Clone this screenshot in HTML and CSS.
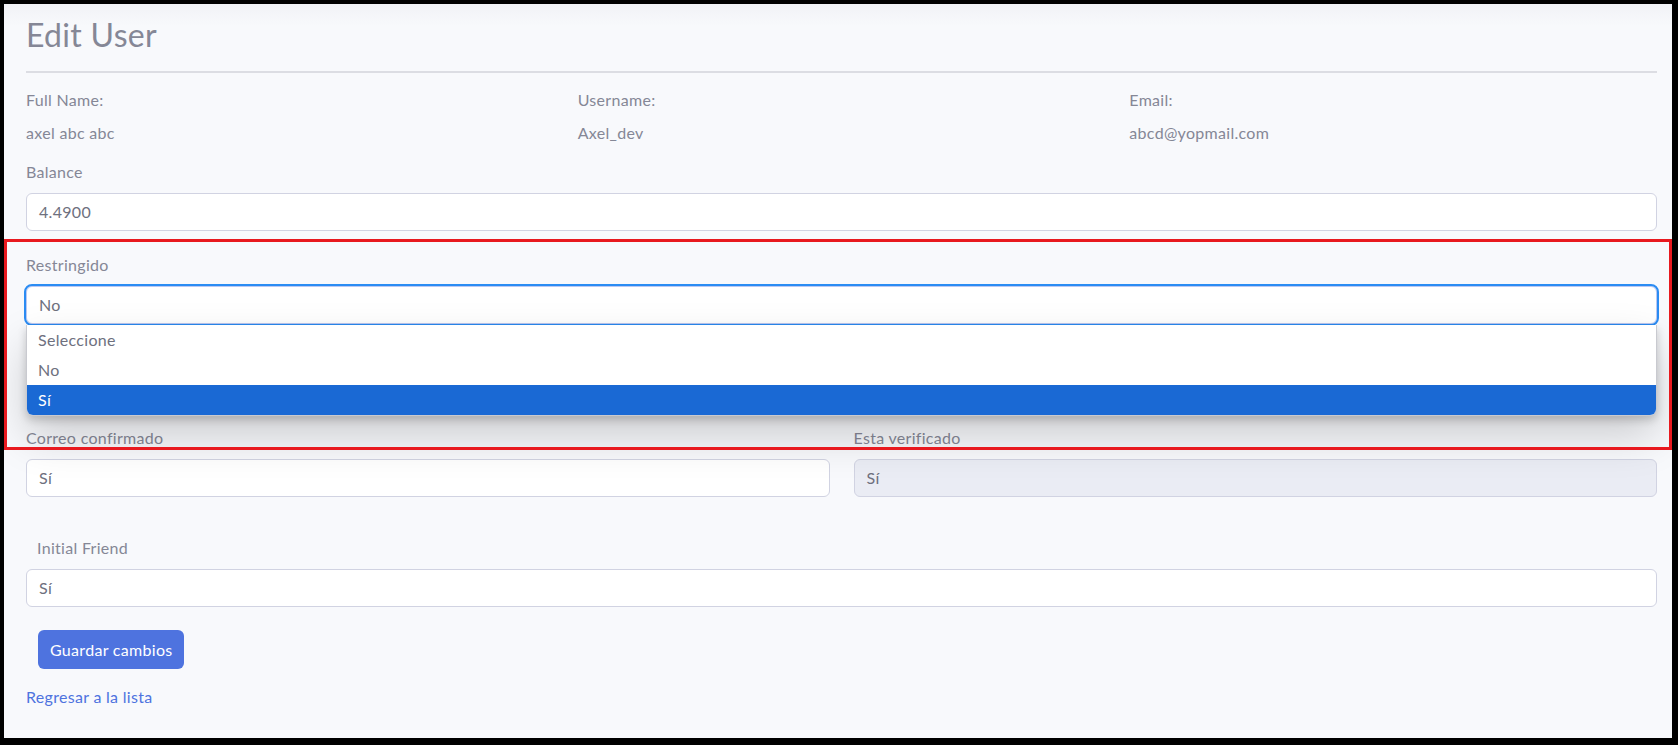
FILE: index.html
```html
<!DOCTYPE html>
<html lang="es">
<head>
<meta charset="utf-8">
<title>Edit User</title>
<link rel="stylesheet" href="styles.css">
</head>
<body>
<div class="frame">
  <main class="page">
    <h1 class="title">Edit User</h1>
    <hr class="divider">
    <div class="info-grid">
      <div class="info">
        <div class="info-label">Full Name:</div>
        <div class="info-value">axel abc abc</div>
      </div>
      <div class="info">
        <div class="info-label">Username:</div>
        <div class="info-value">Axel_dev</div>
      </div>
      <div class="info">
        <div class="info-label">Email:</div>
        <div class="info-value">abcd@yopmail.com</div>
      </div>
    </div>

    <div class="field field-balance">
      <div class="label">Balance</div>
      <div class="control">4.4900</div>
    </div>

    <div class="field field-restr">
      <div class="label">Restringido</div>
      <div class="select-wrap">
        <div class="control select-focused">No</div>
        <ul class="listbox">
          <li class="opt">Seleccione</li>
          <li class="opt">No</li>
          <li class="opt opt-active">Sí</li>
        </ul>
      </div>
    </div>

    <div class="covered"><div class="control"></div></div>

    <div class="two-col">
      <div class="field">
        <div class="label">Correo confirmado</div>
        <div class="control">Sí</div>
      </div>
      <div class="field">
        <div class="label">Esta verificado</div>
        <div class="control control-disabled">Sí</div>
      </div>
    </div>

    <div class="field field-friend">
      <div class="label label-indent">Initial Friend</div>
      <div class="control">Sí</div>
    </div>

    <div class="actions">
      <button class="btn" type="button">Guardar cambios</button>
    </div>
    <a class="back" href="#">Regresar a la lista</a>
  </main>
  <div class="annot"></div>
</div>
</body>
</html>
```

FILE: styles.css
```css
* { box-sizing: border-box; }

html, body {
  margin: 0;
  padding: 0;
  background: #000;
  height: 745px;
  overflow: hidden;
}

.frame {
  position: relative;
  margin: 4px 6px 0 4px;
  height: 734px;
  background: linear-gradient(#f1f2f6, #f8f9fc 22px);
  overflow: hidden;
  font-family: "Lato", "Noto Sans", sans-serif;
  font-size: 16px;
  letter-spacing: 0.3px;
  color: #858796;
}

.page {
  padding: 12px 15px 0 22px;
}

.title {
  margin: 0;
  font-size: 32px;
  line-height: 38px;
  font-weight: 400;
  letter-spacing: 0.3px;
  color: #858796;
}

.divider {
  margin: 17px 0 15px;
  border: 0;
  border-top: 2px solid #dcdde3;
  height: 0;
}

.info-grid {
  display: grid;
  grid-template-columns: 1fr 1fr 1fr;
  column-gap: 24px;
}

.info-label,
.info-value,
.label {
  line-height: 24px;
}

.info-value {
  margin-top: 9px;
}

.field-balance { margin-top: 15px; }
.field-restr { margin-top: 22px; }

.label {
  margin-bottom: 9px;
}

.label-indent {
  padding-left: 11px;
}

.control {
  height: 38px;
  padding: 0 12px;
  line-height: 36px;
  border: 1px solid #d1d3e2;
  border-radius: 6px;
  background: #fff;
  color: #6e707e;
}

.control-disabled {
  background: #eaecf4;
}

.select-wrap {
  position: relative;
}

.select-focused {
  border-color: #bac8f3;
  outline: 2px solid #2b8cf3;
  outline-offset: 0;
}

.listbox {
  position: absolute;
  left: 0;
  right: 0;
  top: 100%;
  margin: 1px 0 0;
  padding: 0;
  list-style: none;
  background: #fff;
  border: 1px solid #c9cad0;
  border-top: 0;
  border-radius: 0 0 7px 7px;
  overflow: hidden;
  z-index: 5;
  box-shadow: 0 4px 8px rgba(0, 0, 0, 0.18), 0 20px 44px rgba(0, 0, 0, 0.18);
}

.opt {
  height: 30px;
  line-height: 30px;
  padding-left: 11px;
  color: #6e707e;
}

.opt-active {
  background: #1a69d4;
  color: #fff;
}

.covered {
  margin-top: 48px;
}

.two-col {
  margin-top: 16px;
  display: grid;
  grid-template-columns: 1fr 1fr;
  column-gap: 24px;
}

.field-friend { margin-top: 39px; }

.actions {
  margin-top: 23px;
  padding-left: 12px;
}

.btn {
  height: 39px;
  padding: 0 12px;
  border: 0;
  border-radius: 6px;
  background: #4e73df;
  color: #fff;
  font-family: inherit;
  font-size: 16px;
  letter-spacing: 0.3px;
  line-height: 39px;
}

.back {
  display: inline-block;
  margin-top: 16px;
  line-height: 24px;
  color: #4e73df;
  text-decoration: none;
}

.annot {
  position: absolute;
  left: 0;
  right: 0;
  top: 235px;
  height: 211px;
  border: 3px solid #e8191f;
  z-index: 10;
  pointer-events: none;
}
```
